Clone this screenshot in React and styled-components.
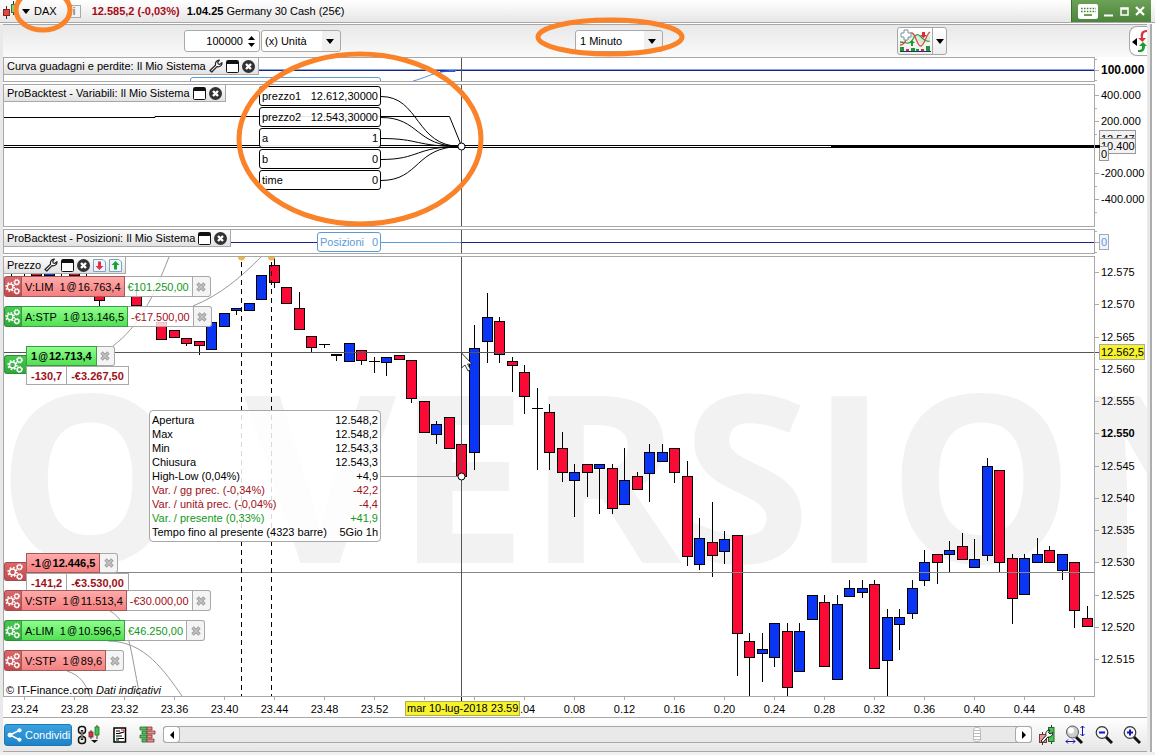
import React from "react";
import styled, { createGlobalStyle } from "styled-components";

// [body, wick top, body top, body bottom, wick bottom], one per minute from 23.23
const FIRST_MINUTE = -36;
const candles = [
  ["r", 262, 264, 270, 275],
  ["r", 262, 264, 270, 275],
  ["r", 262, 264, 275, 275],
  ["b", 262, 264, 275, 275],
  ["r", 262, 264, 270, 275],
  ["r", 262, 264, 275, 275],
  ["r", 262, 264, 270, 275],
  ["r", 276, 280, 300, 305],
  null,
  null,
  ["r", 285, 296, 305, 305],
  null,
  ["r", 322, 322, 339, 339],
  ["r", 330, 330, 337, 337],
  ["r", 338, 338, 343, 345],
  ["r", 341, 341, 345, 354],
  ["b", 322, 322, 349, 349],
  ["b", 313, 313, 326, 326],
  ["b", 308, 308, 310, 314],
  ["b", 303, 303, 310, 310],
  ["b", 275, 275, 299, 299],
  ["r", 258, 265, 282, 287],
  ["r", 287, 287, 303, 303],
  ["r", 292, 308, 329, 329],
  ["r", 336, 336, 347, 351],
  ["r", 344, 344, 344, 347],
  ["b", 354, 354, 355, 360],
  ["b", 343, 343, 361, 361],
  ["r", 350, 350, 360, 364],
  ["r", 357, 361, 361, 372],
  ["b", 357, 357, 362, 375],
  ["r", 355, 355, 359, 359],
  ["r", 360, 360, 398, 402],
  ["r", 401, 401, 432, 432],
  ["b", 421, 424, 434, 443],
  ["r", 417, 417, 448, 448],
  ["r", 444, 444, 476, 476],
  ["b", 325, 348, 452, 469],
  ["b", 293, 317, 341, 362],
  ["r", 317, 321, 354, 362],
  ["r", 357, 361, 365, 391],
  ["r", 365, 372, 396, 413],
  ["r", 388, 408, 408, 469],
  ["r", 404, 412, 452, 469],
  ["r", 432, 448, 472, 481],
  ["b", 464, 472, 480, 516],
  ["r", 464, 464, 472, 496],
  ["b", 464, 464, 468, 513],
  ["r", 464, 468, 508, 513],
  ["b", 448, 480, 504, 504],
  ["r", 472, 476, 489, 489],
  ["b", 444, 452, 473, 501],
  ["b", 444, 452, 461, 461],
  ["r", 448, 448, 472, 482],
  ["r", 461, 476, 556, 565],
  ["b", 518, 538, 564, 569],
  ["r", 502, 542, 555, 576],
  ["b", 531, 539, 551, 563],
  ["r", 535, 535, 633, 675],
  ["r", 633, 641, 657, 696],
  ["b", 633, 649, 653, 681],
  ["b", 623, 623, 657, 666],
  ["r", 623, 631, 687, 696],
  ["b", 623, 631, 671, 671],
  ["b", 595, 595, 619, 619],
  ["r", 595, 602, 666, 666],
  ["b", 595, 604, 679, 679],
  ["b", 580, 588, 596, 596],
  ["b", 580, 588, 592, 597],
  ["r", 580, 584, 668, 668],
  ["b", 609, 617, 660, 696],
  ["b", 609, 617, 624, 649],
  ["b", 580, 588, 613, 618],
  ["b", 550, 562, 580, 585],
  ["r", 554, 554, 562, 583],
  ["b", 541, 550, 554, 571],
  ["r", 533, 546, 559, 559],
  ["b", 539, 559, 567, 567],
  ["b", 458, 466, 555, 560],
  ["r", 470, 470, 562, 571],
  ["r", 554, 558, 598, 623],
  ["b", 554, 558, 594, 594],
  ["b", 538, 554, 562, 562],
  ["r", 546, 550, 562, 562],
  ["b", 554, 554, 570, 579],
  ["r", 562, 562, 610, 627],
  ["r", 606, 618, 626, 626],
];

const barX = (minute) => Math.floor(461.99 + minute * 12.505) + 0.5;

const times = [
  [-35, "23.24"],
  [-31, "23.28"],
  [-27, "23.32"],
  [-23, "23.36"],
  [-19, "23.40"],
  [-15, "23.44"],
  [-11, "23.48"],
  [-7, "23.52"],
  [-3, ""],
  [1, ""],
  [5, "0.04"],
  [9, "0.08"],
  [13, "0.12"],
  [17, "0.16"],
  [21, "0.20"],
  [25, "0.24"],
  [29, "0.28"],
  [33, "0.32"],
  [37, "0.36"],
  [41, "0.40"],
  [45, "0.44"],
  [49, "0.48"],
];

const variables = [
  ["prezzo1", "12.612,30000"],
  ["prezzo2", "12.543,30000"],
  ["a", "1"],
  ["b", "0"],
  ["time", "0"],
];

const barInfo = [
  ["Apertura", "12.548,2"],
  ["Max", "12.548,2"],
  ["Min", "12.543,3"],
  ["Chiusura", "12.543,3"],
  ["High-Low (0,04%)", "+4,9"],
  ["Var. / gg prec. (-0,34%)", "-42,2", "#a01018"],
  ["Var. / unità prec. (-0,04%)", "-4,4", "#a01018"],
  ["Var. / presente (0,33%)", "+41,9", "#109a18"],
  ["Tempo fino al presente (4323 barre)", "5Gio 1h"],
];

const orders = [
  { top: 19, kind: "sell", name: "V:LIM", price: "16.763,4", value: "€101.250,00", gain: true },
  { top: 49, kind: "buy", name: "A:STP", price: "13.146,5", value: "-€17.500,00" },
  { top: 333, kind: "sell", name: "V:STP", price: "11.513,4", value: "-€30.000,00" },
  { top: 363, kind: "buy", name: "A:LIM", price: "10.596,5", value: "€46.250,00", gain: true },
  { top: 393, kind: "sell", name: "V:STP", price: "89,6" },
];

const positions = [
  { top: 89, kind: "buy", qty: "1", price: "12.713,4", points: "-130,7", value: "-€3.267,50" },
  { top: 296, kind: "sell", qty: "-1", price: "12.446,5", points: "-141,2", value: "-€3.530,00" },
];

/* icons */

const Wrench = () => (
  <svg width="14" height="14" viewBox="0 0 14 14">
    <path
      d="M1 11.5 6.5 6.2C6 3.5 7.5 1.2 10.5 1L8.8 3.2 9.2 5 11 5.3 13 3.6C13.2 6.4 11 8.2 8 7.7L2.8 13Z"
      fill="#fff"
      stroke="#222"
      strokeWidth="1.2"
      strokeLinejoin="round"
    />
  </svg>
);

const WindowIcon = () => (
  <svg width="13" height="13" viewBox="0 0 13 13">
    <rect x="0.5" y="0.5" width="12" height="12" rx="1" fill="#fff" stroke="#111" />
    <rect x="1" y="1" width="11" height="3" fill="#111" />
  </svg>
);

const CloseIcon = () => (
  <svg width="13" height="13" viewBox="0 0 13 13">
    <circle cx="6.5" cy="6.5" r="6.5" fill="#333" />
    <path d="M4 4 9 9M9 4 4 9" stroke="#fff" strokeWidth="2.4" />
  </svg>
);

const SheetArrow = ({ up }) => (
  <svg width="13" height="13" viewBox="0 0 13 13">
    <path d="M.5.5H10L12.5 3V12.5H.5Z" fill="#eef5fb" stroke="#7ba4c7" />
    <path
      d={up ? "M6.5 2 10.5 6H8V10.5H5V6H2.5Z" : "M6.5 11 10.5 7H8V2.5H5V7H2.5Z"}
      fill={up ? "#18a524" : "#e23040"}
    />
  </svg>
);

const Gears = () => (
  <svg width="17" height="19" viewBox="0 0 17 19" fill="none" stroke="#fff">
    <circle cx="5.5" cy="10" r="3" strokeWidth="1.4" />
    <circle cx="5.5" cy="10" r="4.4" strokeWidth="1.6" strokeDasharray="1.7 1.75" />
    <circle cx="12.5" cy="5" r="2.2" strokeWidth="1.3" />
    <circle cx="12.5" cy="5" r="3" strokeWidth="1" strokeDasharray="1.2 1.15" />
    <circle cx="12.5" cy="14.5" r="2.2" strokeWidth="1.3" />
    <circle cx="12.5" cy="14.5" r="3" strokeWidth="1" strokeDasharray="1.2 1.15" />
  </svg>
);

const Cross = () => (
  <svg width="10" height="10" viewBox="0 0 10 10">
    <path d="M1.5 1.5 8.5 8.5M8.5 1.5 1.5 8.5" stroke="#9c9c9c" strokeWidth="3.4" />
    <path d="M2 2 8 8M8 2 2 8" stroke="#c4c4c4" strokeWidth="1.6" />
  </svg>
);

const CandlesIcon = () => (
  <svg width="14" height="20" viewBox="0 0 14 20">
    <path d="M3.5 5V18M10.5 0V14" stroke="#333" />
    <rect x="0.5" y="8.5" width="6" height="6" fill="#e04848" stroke="#8a2020" />
    <rect x="8.5" y="3.5" width="4" height="8" fill="#7fd67f" stroke="#2c7a2c" />
  </svg>
);

const Down = () => (
  <svg width="8" height="5" viewBox="0 0 8 5">
    <path d="M0 0H8L4 5Z" fill="#000" />
  </svg>
);

const KeyboardIcon = () => (
  <svg width="20" height="15" viewBox="0 0 20 15">
    <rect width="20" height="15" rx="2" fill="#fff" />
    <path d="M3 4.5H18M3 7.5H18" stroke="#4a8339" strokeWidth="1.6" strokeDasharray="1.6 1.3" />
    <path d="M6 11H14" stroke="#4a8339" strokeWidth="1.6" />
  </svg>
);

const IndicatorsIcon = () => (
  <svg width="32" height="24" viewBox="0 0 32 24">
    <path d="M1 16C7 17 9 4 14 5S19 17 23 15 27 4 31 3V11C27 14 22 5 18 6S8 15 1 12Z" fill="#d5ecd5" />
    <path d="M1 13C7 13 10 17 14 10S20 6 23 9 28 13 31 12" fill="none" stroke="#3f9a3f" strokeWidth="1.3" />
    <path d="M1 16C7 17 9 3 13 4S18 18 22 17 27 5 31 3" fill="none" stroke="#d24a4a" strokeWidth="1.3" />
    <path d="M5 1H9V4H12V8H9V11H5V8H2V4H5Z" fill="#fff" stroke="#7b93a5" />
    <path d="M23 3H26V6H28L24.5 9 21 6H23Z" fill="#d82c38" />
    <path d="M12 17V14H10L13 11 16 14H14V17Z" fill="#1d9a2d" />
    <path d="M1 18H5V22H1ZM12 19H16V22H12ZM17 20H20V22H17ZM27 17H31V22H27Z" fill="#1c9b2c" />
    <path d="M7 20H10V22H7ZM22 20H25V22H22Z" fill="#d82c38" />
    <path d="M1 22.5H32" stroke="#27307f" />
  </svg>
);

const SwapIcon = () => (
  <svg width="17" height="28" viewBox="0 0 17 28">
    <path d="M2 15 7 11V19Z" fill="#000" />
    <path d="M17 5C13 5 13 8 13 11H16L12.5 15 8 11H11C10 7 11 3 17 3Z" fill="#d9343c" />
    <path d="M8 25C14 26 15 22 15 19H17L13 15 9 19H12C12 22 12 23 8 23Z" fill="#1b9e2a" />
  </svg>
);

const ShareIcon = () => (
  <svg width="15" height="14" viewBox="0 0 15 14" fill="#fff" stroke="#fff">
    <path d="M13 2 3 7 13 12" fill="none" strokeWidth="1.5" />
    <circle cx="3" cy="7" r="2" />
    <circle cx="12.5" cy="2.3" r="1.6" />
    <circle cx="12.5" cy="11.7" r="1.6" />
  </svg>
);

const ChainIcon = () => (
  <svg width="24" height="20" viewBox="0 0 24 20">
    <g fill="none" stroke="#111" strokeWidth="1.5">
      <rect x="1.5" y="1.5" width="7" height="7" rx="3" />
      <rect x="1.5" y="11.5" width="7" height="7" rx="3" />
      <path d="M5 5V15" strokeWidth="2.4" />
      <path d="M5 6V14" stroke="#fff" strokeWidth=".8" />
    </g>
    <path d="M14 5V14M20 0V14" stroke="#333" />
    <rect x="12" y="7" width="4" height="5" fill="#d33a3a" stroke="#7a1f1f" strokeWidth=".8" />
    <rect x="18" y="2" width="4" height="8" fill="#44c04c" stroke="#1c701f" strokeWidth=".8" />
    <path d="M14 15H21L17.5 18Z" fill="#111" />
  </svg>
);

const NotesIcon = () => (
  <svg width="14" height="16" viewBox="0 0 14 16">
    <rect x="1" y="1" width="11.5" height="14" fill="#fff" stroke="#000" strokeWidth="1.5" />
    <path d="M3 4H7M3 6.5H6L11 5M3 9H9M5 11.5H11M3 13H6" stroke="#000" strokeWidth="1.2" />
    <path d="M8 3H11V5" stroke="#d22" fill="none" />
    <path d="M3 11.5H5" stroke="#1a9a2a" strokeWidth="1.5" />
  </svg>
);

const DepthIcon = () => (
  <svg width="17" height="17" viewBox="0 0 17 17" strokeWidth=".8">
    <path d="M1 1H8V4H1ZM3 5H8V8H3ZM1 9H8V12H1ZM3 13H8V16H3Z" fill="#4fc65b" stroke="#24682a" />
    <path d="M8 1H13V4H8ZM8 5H16V8H8ZM8 9H13V12H8ZM8 13H15V16H8Z" fill="#e98b8b" stroke="#7c3535" />
  </svg>
);

const SettingsIcon = () => (
  <svg width="16" height="20" viewBox="0 0 16 20">
    <path d="M3.5 7V20M12.5 0V19" stroke="#333" />
    <rect x=".5" y="9.5" width="7" height="8" fill="#e79a9a" stroke="#7c3535" />
    <rect x="9.5" y="2.5" width="5.5" height="14" fill="#4cc455" stroke="#24682a" />
    <path
      d="M2 16 7 10.5C6 7.5 8 5 11 5L9.5 7.5 11 9 13.5 7.5C14 10.5 11.5 12.5 8.8 12L4 17.5Z"
      fill="#fff"
      stroke="#111"
    />
  </svg>
);

const Magnifier = ({ sign }) => (
  <svg width="18" height="20" viewBox="0 0 18 20">
    <path d="M11 12 17 18" stroke="#111" strokeWidth="3" />
    <circle cx="7" cy="7.5" r="5.8" fill="#f8f8ff" stroke="#333" strokeWidth="1.2" />
    <path d={sign === "+" ? "M4 7.5H10M7 4.5V10.5" : "M4 7.5H10"} stroke="#1313b8" strokeWidth="2" />
  </svg>
);

const FitIcon = () => (
  <svg width="20" height="20" viewBox="0 0 20 20">
    <path d="M11 12 17 18" stroke="#111" strokeWidth="3" />
    <circle cx="7.5" cy="7" r="6" fill="#ccc" stroke="#555" />
    <circle cx="6" cy="5.5" r="3" fill="#fff" />
    <path d="M17.5 1V11M15.5 3 17.5 1 19.5 3M15.5 9 17.5 11 19.5 9" fill="none" stroke="#1313b8" />
    <path d="M1 16.5H10M3 14.5 1 16.5 3 18.5M8 14.5 10 16.5 8 18.5" fill="none" stroke="#1313b8" />
  </svg>
);

const Title = ({ text, wrench, sheets }) => (
  <PanelTitle>
    <span>{text}</span>
    {wrench && <IconButton aria-label="Impostazioni"><Wrench /></IconButton>}
    <IconButton aria-label="Finestra"><WindowIcon /></IconButton>
    <IconButton aria-label="Chiudi"><CloseIcon /></IconButton>
    {sheets && <IconButton aria-label="Sposta giù"><SheetArrow /></IconButton>}
    {sheets && <IconButton aria-label="Sposta su"><SheetArrow up /></IconButton>}
  </PanelTitle>
);

const App = () => {
  return (
    <Page>
      <GlobalStyle />
      <TitleBar>
        <CandlesIcon />
        <Instrument>
          <Down />
          DAX
        </Instrument>
        <InfoButton>i</InfoButton>
        <Quote>12.585,2 (-0,03%)</Quote>
        <strong>1.04.25</strong>
        <Market>Germany 30 Cash (25€)</Market>
        <WindowControls>
          <IconButton aria-label="Tastiera"><KeyboardIcon /></IconButton>
          <IconButton aria-label="Riduci">
            <svg width="10" height="12"><path d="M0 10.5H9" stroke="#fff" strokeWidth="2" /></svg>
          </IconButton>
          <IconButton aria-label="Ingrandisci">
            <svg width="9" height="9"><path d="M1 1H8V8H1ZM1 2H8" fill="none" stroke="#fff" strokeWidth="1.5" /></svg>
          </IconButton>
          <IconButton aria-label="Chiudi">
            <svg width="10" height="10"><path d="M1 1 9 9M9 1 1 9" stroke="#fff" strokeWidth="2.2" /></svg>
          </IconButton>
        </WindowControls>
      </TitleBar>

      <Frame>
        <Toolbar>
          <ToolGroup>
            <Spinner>
              <input aria-label="Unità visualizzate" defaultValue="100000" />
              <SpinButtons>
                <button aria-label="Aumenta"><svg width="7" height="4"><path d="M0 4H7L3.5 0Z" /></svg></button>
                <button aria-label="Diminuisci"><svg width="7" height="4"><path d="M0 0H7L3.5 4Z" /></svg></button>
              </SpinButtons>
            </Spinner>
            <SelectBox $width={80} $pad={3}>
              <select aria-label="Tipo di unità"><option>(x) Unità</option></select>
              <Down />
            </SelectBox>
          </ToolGroup>
          <ToolGroup>
            <SelectBox $width={88} $pad={4}>
              <select aria-label="Intervallo"><option>1 Minuto</option></select>
              <Down />
            </SelectBox>
          </ToolGroup>
          <ToolGroup>
            <SplitButton>
              <button aria-label="Indicatori"><IndicatorsIcon /></button>
              <button aria-label="Altri indicatori"><Down /></button>
            </SplitButton>
          </ToolGroup>
          <ToolGroup>
            <SideTab aria-label="Ordini"><SwapIcon /></SideTab>
          </ToolGroup>
        </Toolbar>

        <Panel $height={25}>
          <Plot>
            <Canvas>
              <g transform="translate(-4 -58)" fill="none">
                <path d="M4 69.5H3000" stroke="#7fa6dd" />
                <path d="M4 70.5H3000" stroke="#20208c" />
                <path d="M413 81C425 78 430 74 442 72S450 71 456 71" stroke="#5b8fd6" />
                <path d="M440 71.5H455" stroke="#2858e0" />
                <path d="M190.5 84V80Q190.5 77.5 193 77.5H378Q380.5 77.5 380.5 80V84" stroke="#5b9bd5" />
                <path d="M461.5 57V82" stroke="#555" />
              </g>
            </Canvas>
            <Title text="Curva guadagni e perdite: Il Mio Sistema" wrench />
          </Plot>
          <Axis>
            <path d="M0 2.5H2M0 13.5H4M0 23.5H2" stroke="#aaa" />
            <text x="6" y="17" fontSize="12" fontWeight="bold">100.000</text>
          </Axis>
        </Panel>

        <Panel $height={143}>
          <Plot>
            <Canvas>
              <g transform="translate(-4 -85)" fill="none" stroke="#000">
                <path d="M461.5 84V228" stroke="#555" />
                <path d="M4 117.5H155V116.5H449.5L461.5 146" />
                <path d="M4 145.5H3000M4 147.5H3000" />
                <path d="M831 146.5H3000" strokeWidth="3" />
                {variables.map(([name], i) => {
                  const y = 96.5 + i * 21;
                  return <path key={name} d={`M381 ${y}C420 ${y} 415 146.5 461 146.5`} />;
                })}
                <circle cx="461.5" cy="146.5" r="3.5" fill="#fff" />
              </g>
            </Canvas>
            <Title text="ProBacktest - Variabili: Il Mio Sistema" />
            <Variables>
              {variables.map(([name, value]) => (
                <Variable key={name}>
                  <span>{name}</span>
                  <span>{value}</span>
                </Variable>
              ))}
            </Variables>
          </Plot>
          <Axis>
            {[11, 37, 89, 115].map((y) => (
              <path key={y} d={`M0 ${y + 0.5}H4M0 ${y + 13.5}H2`} stroke="#aaa" />
            ))}
            <text x="6" y="15">400.000</text>
            <text x="6" y="41">200.000</text>
            <text x="6" y="93">-200.000</text>
            <text x="6" y="119">-400.000</text>
            <g stroke="#999" fill="#f2f2f2">
              <rect x="4.5" y="46.5" width="36" height="15" />
              <text x="6" y="59" stroke="none" fill="#000">12.547</text>
              <rect x="4.5" y="54.5" width="36" height="15" />
              <text x="6" y="66" stroke="none" fill="#000">10.400</text>
              <rect x="4.5" y="62.5" width="9" height="14" />
              <text x="6" y="74" stroke="none" fill="#000">0</text>
            </g>
            <path d="M0 62.5H5" stroke="#000" strokeWidth="3" />
          </Axis>
        </Panel>

        <Panel $height={25}>
          <Plot>
            <Canvas>
              <g transform="translate(-4 -230)">
                <path d="M4 242.5H3000" stroke="#20208c" />
                <path d="M381 242.5H461" stroke="#5b9bd5" />
                <path d="M461.5 229V254" stroke="#555" />
              </g>
            </Canvas>
            <Title text="ProBacktest - Posizioni: Il Mio Sistema" />
            <PositionTag>
              <span>Posizioni</span>
              <span>0</span>
            </PositionTag>
          </Plot>
          <Axis>
            <path d="M0 2.5H2M0 13.5H4M0 23.5H2" stroke="#aaa" />
            <rect x="4.5" y="5.5" width="9" height="15" fill="#eef4fb" stroke="#aaa" />
            <text x="6" y="17" fill="#5b9bd5">0</text>
          </Axis>
        </Panel>

        <Panel $height={441} $grow>
          <Canvas>
            <Watermark x="-6" y="307">O VERSION</Watermark>
          </Canvas>
          <Plot>
            <Canvas>
              <g transform="translate(-4 -257)" shapeRendering="crispEdges">
                {candles.map((c, i) => {
                  if (!c) return null;
                  const [side, high, top, bottom, low] = c;
                  const x = barX(FIRST_MINUTE + i);
                  return (
                    <g key={i} stroke="#000">
                      <path d={`M${x} ${high}V${low + 1}`} />
                      {top === bottom ? (
                        <path d={`M${x - 5.5} ${top + 0.5}h11`} />
                      ) : (
                        <rect
                          x={x - 5}
                          y={top + 0.5}
                          width="10"
                          height={bottom - top}
                          fill={side === "r" ? "#fb0a36" : "#0b35f5"}
                        />
                      )}
                    </g>
                  );
                })}
                <path d="M4 572.5H3000" stroke="#888" />
                <path d="M241.5 262V696M271.5 262V696" stroke="#000" strokeDasharray="5 4" />
              </g>
              <g transform="translate(-4 -257)">
                <g fill="none" stroke="#999">
                  <path d="M113 346C140 325 152 300 169 257" />
                  <path d="M193 306C220 295 240 278 261 257" />
                  <path d="M110 611C130 622 130 650 140 696" />
                  <path d="M108 641C145 641 165 672 182 696" />
                  <path d="M67 671C80 675 86 684 90 696" />
                </g>
                <circle cx="241.5" cy="257" r="3.5" fill="#f0b83c" />
                <circle cx="271.5" cy="257" r="3.5" fill="#f0b83c" />
                <path d="M381 476.5H458" stroke="#999" />
              </g>
            </Canvas>

            <Crosshair>
              <g transform="translate(-4 -257)">
                <path d="M461.5 256V3000M4 352.5H3000" stroke="#555" />
                <circle cx="461.5" cy="476.5" r="3.5" fill="#fff" stroke="#000" />
                <path
                  d="M461.5 353V368L465 365 468 371 470.5 369.5 467.5 364H472Z"
                  fill="#fff"
                  stroke="#222"
                  strokeWidth=".9"
                />
              </g>
            </Crosshair>

            {positions.map((p) => (
              <Position key={p.top} $top={p.top}>
                <GearButton $kind={p.kind} $offset={9} $width={22} aria-label="Posizione"><Gears /></GearButton>
                <div>
                  <PillRow $height={20}>
                    <Pill $kind={p.kind} $bold>{p.qty}<At>@</At>{p.price}</Pill>
                    <PillClose aria-label="Chiudi posizione"><Cross /></PillClose>
                  </PillRow>
                  <PillRow $height={19}>
                    <Pill $bold>{p.points}</Pill>
                    <Pill $bold>{p.value}</Pill>
                  </PillRow>
                </div>
              </Position>
            ))}
            {orders.map((o) => (
              <Order key={o.top} $top={o.top}>
                <GearButton $kind={o.kind} $width={17} aria-label="Ordine"><Gears /></GearButton>
                <Pill $kind={o.kind}>{o.name}&nbsp;&nbsp;1<At>@</At>{o.price}</Pill>
                {o.value && <Pill $gain={o.gain}>{o.value}</Pill>}
                <PillClose aria-label="Annulla ordine"><Cross /></PillClose>
              </Order>
            ))}

            <BarInfo>
              <tbody>
                {barInfo.map(([label, value, color]) => (
                  <InfoRow key={label} $color={color}>
                    <th scope="row">{label}</th>
                    <td>{value}</td>
                  </InfoRow>
                ))}
              </tbody>
            </BarInfo>

            <Title text="Prezzo" wrench sheets />
            <Copyright>
              © IT-Finance.com <em>Dati indicativi</em>
            </Copyright>
          </Plot>
          <Axis>
            {Array.from({ length: 13 }, (_, i) => {
              const price = 12575 - i * 5;
              const y = 16 + Math.round(i * 32.25);
              return (
                <g key={price}>
                  <path d={`M0 ${y + 0.5}H4`} stroke="#aaa" />
                  <text x="6" y={y + 4} fontWeight={price === 12550 ? "bold" : "normal"}>
                    {`12.${price - 12000}`}
                  </text>
                </g>
              );
            })}
            <path d="M0 96.5H4" stroke="#555" />
            <rect x="4.5" y="88.5" width="45" height="15" fill="#f6f22c" stroke="#aaa" />
            <text x="6" y="100">12.562,5</text>
          </Axis>
        </Panel>

        <TimeAxis>
          <Canvas>
            <g transform="translate(-3 -697)">
              {times.map(([minute, label]) => (
                <g key={minute}>
                  <path d={`M${barX(minute)} 697V700`} stroke="#aaa" />
                  <text x={barX(minute)} y="713" textAnchor="middle">{label}</text>
                </g>
              ))}
              <path d="M461.5 697V701" stroke="#000" />
            </g>
          </Canvas>
          <TimeTag>mar 10-lug-2018 23.59</TimeTag>
        </TimeAxis>

        <Footer>
          <ShareButton>
            <ShareIcon />
            Condividi
          </ShareButton>
          <IconButton aria-label="Collega"><ChainIcon /></IconButton>
          <IconButton aria-label="Note"><NotesIcon /></IconButton>
          <IconButton aria-label="Book"><DepthIcon /></IconButton>
          <ScrollBar>
            <button aria-label="Indietro"><svg width="4" height="8"><path d="M4 0V8L0 4Z" /></svg></button>
            <Track><Thumb /></Track>
            <button aria-label="Avanti"><svg width="4" height="8"><path d="M0 0V8L4 4Z" /></svg></button>
          </ScrollBar>
          <ZoomTools>
            <IconButton aria-label="Stile grafico"><SettingsIcon /></IconButton>
            <IconButton aria-label="Adatta"><FitIcon /></IconButton>
            <IconButton aria-label="Riduci zoom"><Magnifier sign="-" /></IconButton>
            <IconButton aria-label="Aumenta zoom"><Magnifier sign="+" /></IconButton>
          </ZoomTools>
        </Footer>
      </Frame>
      <Status />

      <Markers>
        <ellipse cx="43" cy="10" rx="27" ry="20" />
        <ellipse cx="610" cy="37" rx="72" ry="17" />
        <ellipse cx="360" cy="139" rx="121" ry="85" />
      </Markers>
    </Page>
  );
};

export default App;

const GlobalStyle = createGlobalStyle`
  * {
    box-sizing: border-box;
  }
  body {
    margin: 0;
    background: #fff;
    color: #000;
    font-family: "Liberation Sans", Arial, sans-serif;
    font-size: 11px;
  }
  button, input, select {
    margin: 0;
    padding: 0;
    border: 0;
    background: none;
    color: inherit;
    font: inherit;
  }
  svg {
    display: block;
  }
`;

const Page = styled.div`
  position: relative;
  display: flex;
  flex-direction: column;
  min-height: 100vh;
  overflow: hidden;
`;

const TitleBar = styled.header`
  display: flex;
  align-items: center;
  height: 23px;
  padding: 0 4px 0 3px;
  border-bottom: 1px solid #a8a8a8;
  background: linear-gradient(#fff, #e6e6e6);
`;

const IconButton = styled.button`
  display: flex;
  align-items: center;
  justify-content: center;
`;

const Instrument = styled.button`
  display: flex;
  align-items: center;
  gap: 4px;
  margin-left: 5px;
`;

const InfoButton = styled.button`
  width: 13px;
  height: 13px;
  margin: 0 11px;
  border: 1px solid #aaa;
  background: #f4f4f4;
  color: #888;
  font-weight: bold;
  line-height: 11px;
`;

const Quote = styled.strong`
  margin-right: 7px;
  color: #a80a14;
`;

const Market = styled.span`
  margin-left: 3px;
`;

const WindowControls = styled.div`
  display: flex;
  align-items: center;
  align-self: stretch;
  gap: 6px;
  margin-left: auto;
  padding: 0 6px;
  border-left: 1px solid #3c6e2c;
  background: linear-gradient(#6ba257, #4d833b);
`;

const Frame = styled.main`
  display: flex;
  flex: 1;
  flex-direction: column;
  margin: 1px 3px 0 0;
  padding: 0 3px;
  border-right: 2px solid #adadad;
  background: linear-gradient(to right, #e9e9e9 3px, #fff 3px, #fff calc(100% - 3px), #e9e9e9 calc(100% - 3px));
`;

const Toolbar = styled.div`
  display: grid;
  grid-template-columns: 338fr 322fr 284fr 200fr;
  height: 33px;
  border-top: 1px solid #a8a8a8;
  background: linear-gradient(#e8e8e8, #fafafa);
`;

const ToolGroup = styled.div`
  display: flex;
  align-items: center;
  justify-content: flex-end;
  gap: 1px;
`;

const Spinner = styled.div`
  display: flex;
  width: 76px;
  height: 22px;
  border: 1px solid #aaa;
  border-radius: 3px;
  background: #fff;

  input {
    flex: 1;
    min-width: 0;
    text-align: right;
  }
`;

const SpinButtons = styled.div`
  display: flex;
  flex-direction: column;
  justify-content: center;
  gap: 3px;
  width: 16px;

  button {
    display: flex;
    justify-content: center;
  }
`;

const SelectBox = styled.div`
  position: relative;
  width: ${({ $width }) => $width}px;
  height: 22px;
  border: 1px solid #aaa;
  border-radius: 3px;
  background: linear-gradient(to right, #fff calc(100% - 18px), #f0f0f0 calc(100% - 18px));

  select {
    width: 100%;
    height: 100%;
    padding-left: ${({ $pad }) => $pad}px;
    appearance: none;
  }

  svg {
    position: absolute;
    top: 8px;
    right: 6px;
    pointer-events: none;
  }
`;

const SplitButton = styled.div`
  display: flex;
  width: 50px;
  height: 28px;
  border: 1px solid #a6a6a6;
  border-radius: 3px;
  background: linear-gradient(#fff, #eee);

  button {
    display: flex;
    flex: 1;
    align-items: center;
    justify-content: center;
  }

  button:first-child {
    flex: 0 0 35px;
    border-right: 1px solid #a6a6a6;
  }
`;

const SideTab = styled.button`
  width: 18px;
  height: 30px;
  border: 1px solid #a6a6a6;
  border-right: 0;
  border-radius: 8px 0 0 8px;
  background: #fff;
`;

const Panel = styled.section`
  position: relative;
  display: flex;
  flex: ${({ $grow, $height }) => ($grow ? `1 0 ${$height}px` : `0 0 ${$height}px`)};
  margin-bottom: ${({ $grow }) => ($grow ? 0 : 2)}px;
  overflow: hidden;
`;

const Plot = styled.div`
  position: relative;
  flex: 1;
  border: 1px solid #a8a8a8;
  overflow: hidden;
`;

const Canvas = styled.svg`
  position: absolute;
  inset: 0;
  width: 100%;
  height: 100%;
`;

const Crosshair = styled(Canvas)`
  pointer-events: none;
`;

const Watermark = styled.text`
  fill: #f2f2f2;
  font-family: "Open Sans", sans-serif;
  font-size: 234px;
  font-weight: bold;
`;

const Axis = styled.svg`
  position: relative;
  flex: 0 0 52px;
  width: 52px;
`;

const PanelTitle = styled.div`
  position: relative;
  display: inline-flex;
  align-items: center;
  gap: 3px;
  height: 17px;
  padding: 0 3px;
  border-right: 1px solid #a8a8a8;
  border-bottom: 1px solid #a8a8a8;
  background: linear-gradient(#fdfdfd, #e2e2e2);
  vertical-align: top;
`;

const Variables = styled.div`
  position: absolute;
  top: 1px;
  left: 255px;
  display: flex;
  flex-direction: column;
  gap: 1px;
  width: 122px;
`;

const Variable = styled.div`
  display: flex;
  align-items: center;
  justify-content: space-between;
  height: 20px;
  padding: 0 2px;
  border: 1px solid #000;
  border-radius: 3px;
  background: rgba(255, 255, 255, 0.9);
`;

const PositionTag = styled.div`
  position: absolute;
  top: 2px;
  left: 313px;
  display: flex;
  align-items: center;
  justify-content: space-between;
  width: 64px;
  height: 20px;
  padding: 0 2px;
  border: 1px solid #5b9bd5;
  border-radius: 3px;
  background: #fff;
  color: #5b9bd5;
`;

const Order = styled.div`
  position: absolute;
  top: ${({ $top }) => $top}px;
  left: 0;
  display: flex;
  height: 21px;
`;

const Position = styled.div`
  position: absolute;
  top: ${({ $top }) => $top}px;
  left: 0;
  display: flex;
  align-items: flex-start;
`;

const fills = {
  buy: "linear-gradient(#8cff8c, #52e052)",
  sell: "linear-gradient(#ffaaaa, #f58080)",
};

const GearButton = styled.button`
  display: flex;
  align-items: center;
  justify-content: center;
  width: ${({ $width }) => $width}px;
  height: ${({ $offset }) => ($offset ? 19 : 21)}px;
  margin-top: ${({ $offset }) => $offset || 0}px;
  border: 1px solid ${({ $kind }) => ($kind === "buy" ? "#2b8f35" : "#a84a4c")};
  border-right: 0;
  border-radius: 3px 0 0 3px;
  background: ${({ $kind }) =>
    $kind === "buy" ? "linear-gradient(#48c952, #2fa83a)" : "linear-gradient(#d86a6c, #c04a4d)"};
`;

const PillRow = styled.div`
  display: flex;
  height: ${({ $height }) => $height}px;
`;

const Pill = styled.span`
  display: flex;
  align-items: center;
  padding: 0 4px;
  border: 1px solid
    ${({ $kind }) => ($kind === "buy" ? "#3f9a48" : $kind === "sell" ? "#a05a5c" : "#a8a8a8")};
  border-left-width: ${({ $kind }) => ($kind ? 1 : 0)}px;
  background: ${({ $kind }) => fills[$kind] || "rgba(255, 255, 255, 0.8)"};
  color: ${({ $kind, $gain }) => ($kind ? "#000" : $gain ? "#109a18" : "#a01018")};
  font-weight: ${({ $bold }) => ($bold ? "bold" : "normal")};

  ${Order} & {
    padding: 0 3px;
  }

  ${PillRow} &:first-child {
    border-left-width: 1px;
  }
`;

const At = styled.span`
  margin: 0 1px;
  font-size: 10px;
`;

const PillClose = styled.button`
  display: flex;
  align-items: center;
  justify-content: center;
  width: 18px;
  border: 1px solid #a8a8a8;
  border-left: 0;
  border-radius: 0 3px 3px 0;
  background: #f4f4f4;
`;

const BarInfo = styled.table`
  position: absolute;
  top: 153px;
  left: 145px;
  width: 232px;
  padding: 2px 1px;
  border: 1px solid #a8a8a8;
  border-radius: 4px;
  border-spacing: 0;
  background: rgba(255, 255, 255, 0.85);
`;

const InfoRow = styled.tr`
  height: 14px;
  color: ${({ $color }) => $color || "#000"};
  line-height: 14px;
  white-space: nowrap;

  th,
  td {
    padding: 0 1px;
    font-weight: normal;
    text-align: left;
  }

  td {
    text-align: right;
  }
`;

const Copyright = styled.div`
  position: absolute;
  bottom: 0;
  left: 2px;
  line-height: 12px;
`;

const TimeAxis = styled.div`
  position: relative;
  height: 21px;
  border-bottom: 1px solid #a8a8a8;
`;

const TimeTag = styled.div`
  position: absolute;
  top: 4px;
  left: 402px;
  height: 15px;
  padding: 0 1px;
  border: 1px solid #b0ad50;
  background: #f6f22c;
  line-height: 13px;
`;

const Footer = styled.footer`
  display: flex;
  align-items: center;
  gap: 12px;
  height: 34px;
  padding: 0 6px 0 1px;
  border-bottom: 1px solid #a8a8a8;
  background: linear-gradient(#fff, #e6e6e6);
`;

const ShareButton = styled.button`
  display: flex;
  align-items: center;
  gap: 3px;
  height: 22px;
  margin-right: -7px;
  padding: 0 1px 0 2px;
  border: 1px solid #1c78b5;
  border-radius: 3px;
  background: linear-gradient(#3ba0e0, #1d83c8);
  color: #fff;
`;

const ScrollBar = styled.div`
  display: flex;
  flex: 1;
  height: 17px;
  margin: 0 -5px;
  border: 1px solid #a8a8a8;
  border-radius: 3px;
  background: #e9e9e9;

  > button {
    display: flex;
    align-items: center;
    justify-content: center;
    width: 15px;
    border-radius: 3px;
    background: #fff;
    box-shadow: 0 0 0 1px #a8a8a8;
  }
`;

const Track = styled.div`
  display: flex;
  flex: 1;
  justify-content: flex-end;
  padding-right: 35px;
`;

const Thumb = styled.div`
  width: 8px;
  border: 1px solid #bbb;
  border-radius: 3px;
  background: repeating-linear-gradient(#fff 0 2px, #bbb 2px 3px);
`;

const ZoomTools = styled.div`
  display: flex;
  align-items: center;
  gap: 10px;
`;

const Status = styled.div`
  height: 3px;
  background: #f0f0f0;
`;

const Markers = styled.svg`
  position: absolute;
  inset: 0;
  width: 100%;
  height: 100%;
  fill: none;
  stroke: #fa8228;
  stroke-width: 5;
  pointer-events: none;
`;
